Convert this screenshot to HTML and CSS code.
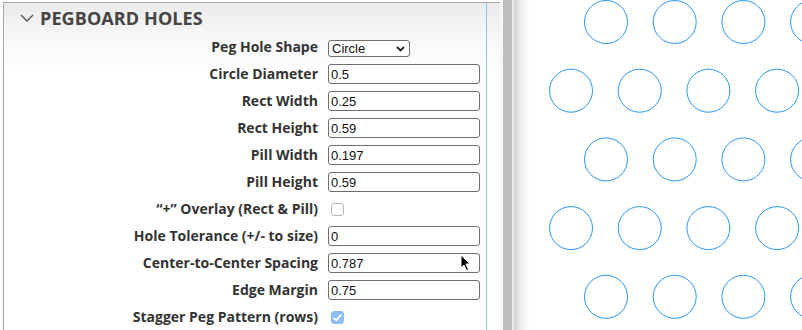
FILE: index.html
```html
<!DOCTYPE html>
<html lang="en">
<head>
    <meta charset="UTF-8">
    <meta name="viewport" content="width=device-width, initial-scale=1.0">
    <title>Pegboard Generator</title>
    <link rel="stylesheet" href="styles.css">
</head>
<body>
    <div class="app">
        <aside class="sidebar">
            <div class="panel">
                <h2 class="section-title">
                    <svg class="chevron" width="14" height="8" viewBox="0 0 14 8"><polyline points="1,1 7,7 13,1" /></svg>
                    PEGBOARD HOLES
                </h2>

                <div class="fields">
                    <label class="field-label" for="shape">Peg Hole Shape</label>
                    <select id="shape" class="field-select">
                        <option>Circle</option>
                        <option>Rect</option>
                        <option>Pill</option>
                    </select>

                    <label class="field-label" for="diameter">Circle Diameter</label>
                    <input type="text" id="diameter" class="field-input" value="0.5">

                    <label class="field-label" for="rectWidth">Rect Width</label>
                    <input type="text" id="rectWidth" class="field-input" value="0.25">

                    <label class="field-label" for="rectHeight">Rect Height</label>
                    <input type="text" id="rectHeight" class="field-input" value="0.59">

                    <label class="field-label" for="pillWidth">Pill Width</label>
                    <input type="text" id="pillWidth" class="field-input" value="0.197">

                    <label class="field-label" for="pillHeight">Pill Height</label>
                    <input type="text" id="pillHeight" class="field-input" value="0.59">

                    <label class="field-label" for="overlay">“+” Overlay (Rect &amp; Pill)</label>
                    <input type="checkbox" id="overlay" class="field-check">

                    <label class="field-label" for="tolerance">Hole Tolerance (+/- to size)</label>
                    <input type="text" id="tolerance" class="field-input" value="0">

                    <label class="field-label" for="spacing">Center-to-Center Spacing</label>
                    <input type="text" id="spacing" class="field-input" value="0.787">

                    <label class="field-label" for="margin">Edge Margin</label>
                    <input type="text" id="margin" class="field-input" value="0.75">

                    <label class="field-label" for="stagger">Stagger Peg Pattern (rows)</label>
                    <input type="checkbox" id="stagger" class="field-check" checked>
                </div>
            </div>
        </aside>

        <div class="splitter"></div>

        <main class="preview">
            <svg class="board" width="272" height="330" viewBox="0 0 272 330">
                <!-- rangée 1 -->
                <circle cx="76" cy="22" r="21.5" />
                <circle cx="144.7" cy="22" r="21.5" />
                <circle cx="213.4" cy="22" r="21.5" />
                <circle cx="282.1" cy="22" r="21.5" />
                <!-- rangée 2 -->
                <circle cx="41" cy="90.7" r="21.5" />
                <circle cx="109.7" cy="90.7" r="21.5" />
                <circle cx="178.4" cy="90.7" r="21.5" />
                <circle cx="247.1" cy="90.7" r="21.5" />
                <!-- rangée 3 -->
                <circle cx="76" cy="159.4" r="21.5" />
                <circle cx="144.7" cy="159.4" r="21.5" />
                <circle cx="213.4" cy="159.4" r="21.5" />
                <circle cx="282.1" cy="159.4" r="21.5" />
                <!-- rangée 4 -->
                <circle cx="41" cy="228.1" r="21.5" />
                <circle cx="109.7" cy="228.1" r="21.5" />
                <circle cx="178.4" cy="228.1" r="21.5" />
                <circle cx="247.1" cy="228.1" r="21.5" />
                <!-- rangée 5 -->
                <circle cx="76" cy="296.8" r="21.5" />
                <circle cx="144.7" cy="296.8" r="21.5" />
                <circle cx="213.4" cy="296.8" r="21.5" />
                <circle cx="282.1" cy="296.8" r="21.5" />
            </svg>
        </main>
    </div>

    <svg class="cursor" width="12" height="18" viewBox="0 0 12 18">
        <path d="M1 1 L1 14 L4 11 L6.5 16.5 L8.5 15.5 L6 10 L10 10 Z" />
    </svg>
</body>
</html>
```

FILE: styles.css
```css
body {
    margin: 0;
    background: #ffffff;
    font-family: 'Open Sans', sans-serif;
    overflow: hidden;
}

.app {
    display: flex;
    height: 330px;
}

.sidebar {
    box-sizing: border-box;
    width: 497px;
    margin-left: 3px;
    margin-top: 2px;
    border-left: 1px solid #a9a9a9;
    border-top: 1px solid #a9a9a9;
    background: linear-gradient(#ebebeb 0, #f7f7f7 35px, #ffffff 70px);
}

.panel {
    width: 483px;
    height: 100%;
    box-sizing: border-box;
    border-right: 1px solid #8cc6ff;
}

.section-title {
    display: flex;
    align-items: center;
    margin: 0;
    padding: 3px 0 0 16px;
    font-size: 18px;
    line-height: 24px;
    font-weight: 700;
    color: #444444;
    letter-spacing: 0.1px;
}

.chevron {
    margin-right: 6px;
    fill: none;
    stroke: #555555;
    stroke-width: 1.4;
}

.fields {
    display: grid;
    grid-template-columns: 314px 152px;
    grid-auto-rows: 20px;
    column-gap: 10px;
    row-gap: 7px;
    align-items: center;
    margin-top: 7px;
}

.field-label {
    text-align: right;
    white-space: nowrap;
    font-size: 14px;
    font-weight: 700;
    line-height: 20px;
    color: #333333;
}

.field-input {
    box-sizing: border-box;
    width: 152px;
    height: 20px;
    margin: 0;
    padding: 0 2px;
    border: 1px solid #6e6e6e;
    border-radius: 3px;
    background: #ffffff;
    font-family: 'Liberation Sans', Arial, sans-serif;
    font-size: 13px;
    color: #111111;
    outline: none;
}

.field-select {
    align-self: end;
    appearance: none;
    box-sizing: border-box;
    width: 82px;
    height: 17px;
    margin: 0;
    padding: 0 0 0 3px;
    border: 1px solid #6e6e6e;
    border-radius: 3px;
    background: #ffffff url("data:image/svg+xml,%3Csvg xmlns='http://www.w3.org/2000/svg' width='9' height='6' viewBox='0 0 9 6'%3E%3Cpolyline points='1,1 4.5,4.5 8,1' fill='none' stroke='%23222' stroke-width='1.8'/%3E%3C/svg%3E") no-repeat right 4px center;
    font-family: 'Liberation Sans', Arial, sans-serif;
    font-size: 13px;
    line-height: 15px;
    color: #111111;
}

.field-check {
    appearance: none;
    box-sizing: border-box;
    width: 13px;
    height: 13px;
    margin: 0 0 0 3px;
    border: 1px solid #b8b8b8;
    border-radius: 3px;
    background: #ffffff;
}

.field-check:checked {
    border-color: #8dbdf1;
    background: #8dbdf1 url("data:image/svg+xml,%3Csvg xmlns='http://www.w3.org/2000/svg' width='13' height='13' viewBox='0 0 13 13'%3E%3Cpolyline points='2.5,6.8 5.2,9.3 10.3,3.5' fill='none' stroke='%23fff' stroke-width='1.8'/%3E%3C/svg%3E") no-repeat -1px -1px;
}

.splitter {
    width: 30px;
    flex-shrink: 0;
    background: linear-gradient(to right,
        #f7f7f7 0, #f7f7f7 3px,
        #bdbdbd 3px, #bdbdbd 12px,
        #ededed 12px, #ededed 14px,
        #cfcfcf 14px, #d6d6d6 15px,
        #ebebeb 20px, #ffffff 30px);
}

.preview {
    flex: 1;
    background: #ffffff;
}

.board {
    display: block;
}

.board circle {
    fill: none;
    stroke: #2a97f2;
    stroke-width: 1;
}

.cursor {
    position: absolute;
    left: 460px;
    top: 254px;
}

.cursor path {
    fill: #000000;
    stroke: #ffffff;
    stroke-width: 1;
    stroke-linejoin: round;
}
```
